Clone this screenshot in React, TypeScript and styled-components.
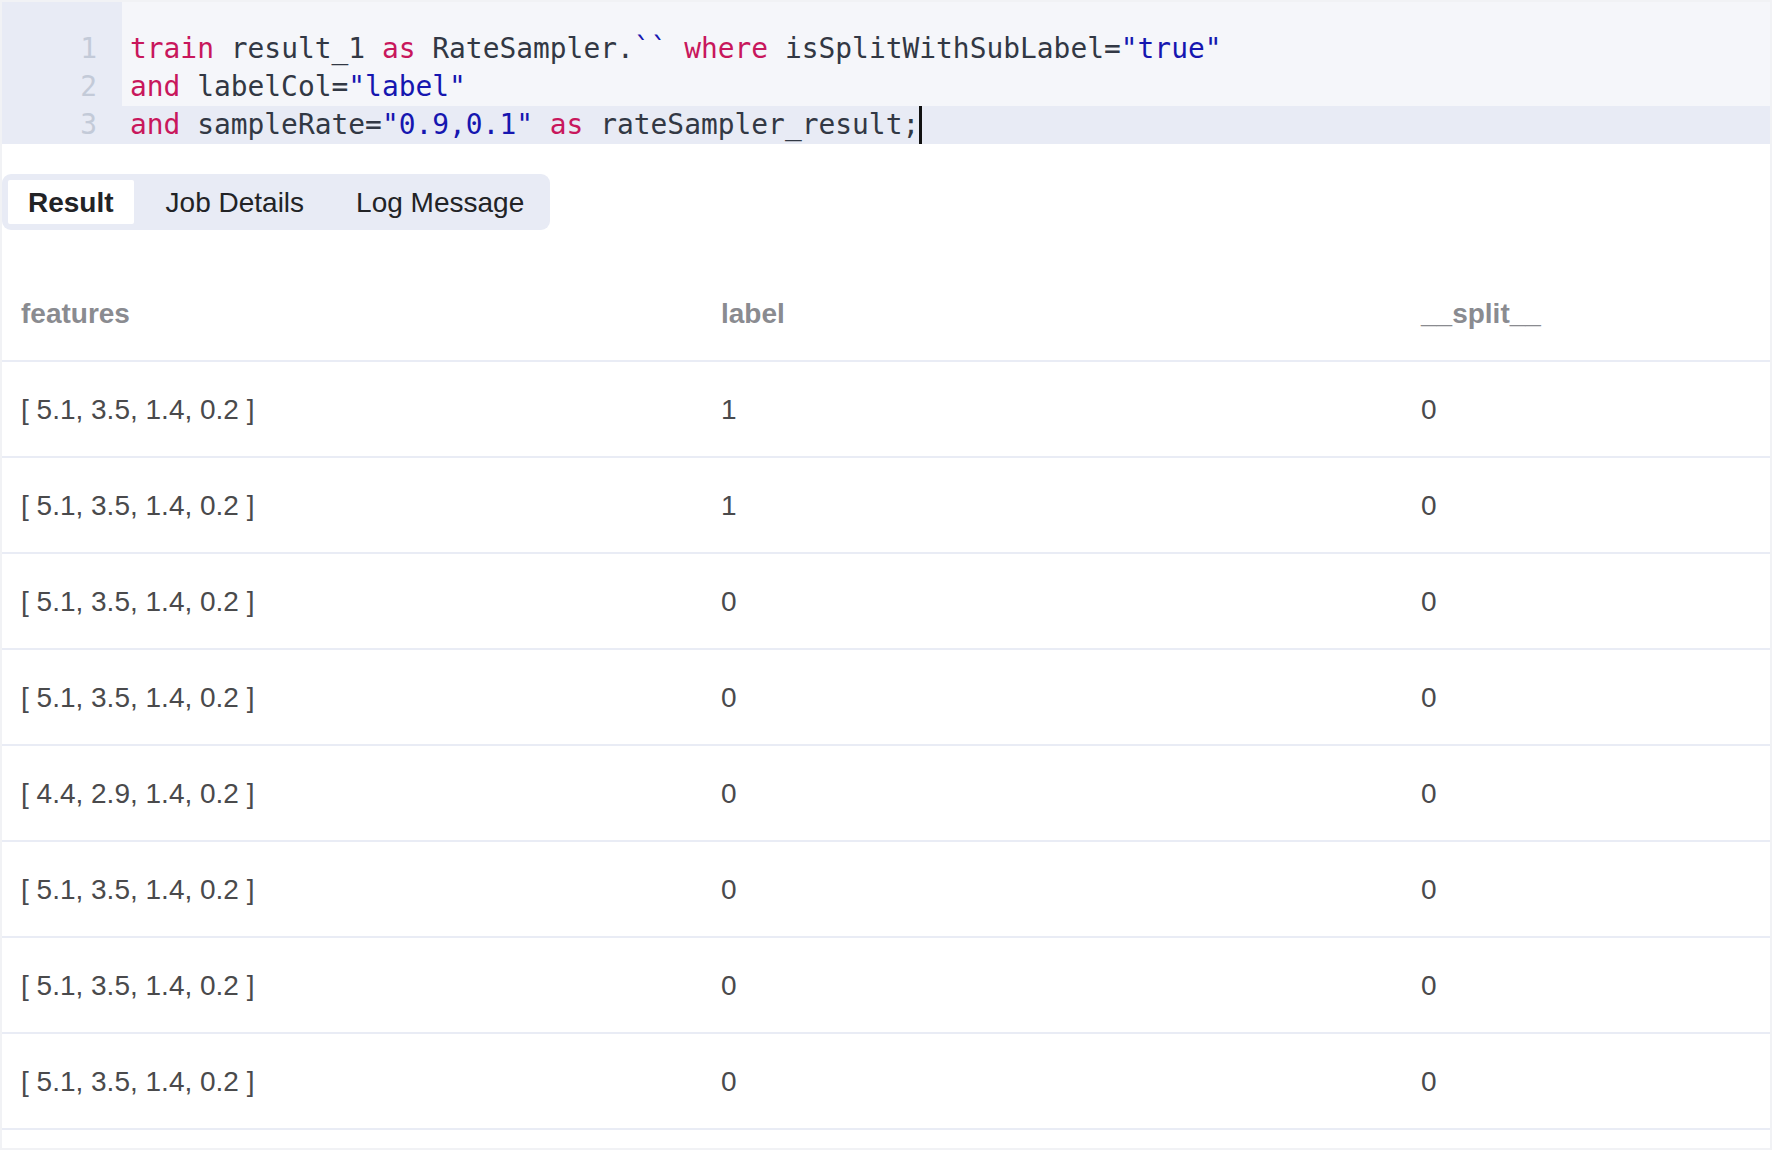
import React from "react";
import styled, { createGlobalStyle } from "styled-components";

const GlobalStyle = createGlobalStyle`
  html, body { margin: 0; padding: 0; background: #ffffff; }
  * { box-sizing: border-box; }
`;

const Page = styled.div`
  width: 1772px;
  height: 1150px;
  border: 2px solid #f1f2f5;
  background: #ffffff;
  font-family: "Liberation Sans", Arial, sans-serif;
  overflow: hidden;
`;

const Editor = styled.div`
  display: flex;
  height: 142px;
  font-family: "DejaVu Sans Mono", "Liberation Mono", monospace;
  font-size: 27.9px;
`;

const Gutter = styled.div`
  width: 120px;
  background: #e8ebf5;
  padding-top: 28px;
  display: flex;
  flex-direction: column;
`;

const LineNo = styled.div`
  height: 38px;
  line-height: 38px;
  text-align: right;
  padding-right: 25px;
  color: #c3cad8;
`;

const Code = styled.div`
  flex: 1;
  background: #f5f6fa;
  padding-top: 28px;
  display: flex;
  flex-direction: column;
`;

const CodeLine = styled.div<{ $active?: boolean }>`
  height: 38px;
  line-height: 38px;
  padding-left: 8px;
  white-space: pre;
  color: #323844;
  background: ${(p) => (p.$active ? "#e8ebf5" : "transparent")};
  display: flex;
  align-items: center;
`;

const Tok = styled.span<{ $k?: "kw" | "str" }>`
  color: ${(p) => (p.$k === "kw" ? "#c8175c" : p.$k === "str" ? "#1616b0" : "#323844")};
`;

const Caret = styled.span`
  display: inline-block;
  width: 3px;
  height: 38px;
  background: #111111;
`;

const TabBar = styled.div`
  margin-top: 30px;
  display: inline-flex;
  gap: 12px;
  padding: 6px;
  height: 56px;
  background: #e8ebf5;
  border-radius: 9px;
`;

const Tab = styled.div<{ $active?: boolean }>`
  height: 44px;
  padding: 2px 20px 0;
  display: flex;
  align-items: center;
  font-size: 28px;
  color: #222326;
  font-weight: ${(p) => (p.$active ? 700 : 400)};
  background: ${(p) => (p.$active ? "#ffffff" : "transparent")};
  border-radius: 2px;
`;

const Table = styled.div`
  margin-top: 36px;
  display: flex;
  flex-direction: column;
`;

const Row = styled.div`
  display: grid;
  grid-template-columns: 700px 700px 1fr;
  height: 96px;
  border-bottom: 2px solid #e9ecf5;
`;

const Cell = styled.div<{ $head?: boolean }>`
  display: flex;
  align-items: center;
  padding: 2px 0 0 19px;
  font-size: 28px;
  color: ${(p) => (p.$head ? "#8a8b90" : "#4a4a4c")};
  font-weight: ${(p) => (p.$head ? 700 : 400)};
  white-space: pre;
`;

const rows: [string, string, string][] = [
  ["[ 5.1, 3.5, 1.4, 0.2 ]", "1", "0"],
  ["[ 5.1, 3.5, 1.4, 0.2 ]", "1", "0"],
  ["[ 5.1, 3.5, 1.4, 0.2 ]", "0", "0"],
  ["[ 5.1, 3.5, 1.4, 0.2 ]", "0", "0"],
  ["[ 4.4, 2.9, 1.4, 0.2 ]", "0", "0"],
  ["[ 5.1, 3.5, 1.4, 0.2 ]", "0", "0"],
  ["[ 5.1, 3.5, 1.4, 0.2 ]", "0", "0"],
  ["[ 5.1, 3.5, 1.4, 0.2 ]", "0", "0"],
];

export default function App() {
  return (
    <>
      <GlobalStyle />
      <Page>
        <Editor>
          <Gutter>
            <LineNo>1</LineNo>
            <LineNo>2</LineNo>
            <LineNo>3</LineNo>
          </Gutter>
          <Code>
            <CodeLine>
              <Tok $k="kw">train</Tok>
              <Tok> result_1 </Tok>
              <Tok $k="kw">as</Tok>
              <Tok> RateSampler.</Tok>
              <Tok $k="str">``</Tok>
              <Tok> </Tok>
              <Tok $k="kw">where</Tok>
              <Tok> isSplitWithSubLabel=</Tok>
              <Tok $k="str">"true"</Tok>
            </CodeLine>
            <CodeLine>
              <Tok $k="kw">and</Tok>
              <Tok> labelCol=</Tok>
              <Tok $k="str">"label"</Tok>
            </CodeLine>
            <CodeLine $active>
              <Tok $k="kw">and</Tok>
              <Tok> sampleRate=</Tok>
              <Tok $k="str">"0.9,0.1"</Tok>
              <Tok> </Tok>
              <Tok $k="kw">as</Tok>
              <Tok> rateSampler_result;</Tok>
              <Caret />
            </CodeLine>
          </Code>
        </Editor>
        <TabBar>
          <Tab $active>Result</Tab>
          <Tab>Job Details</Tab>
          <Tab>Log Message</Tab>
        </TabBar>
        <Table>
          <Row>
            <Cell $head>features</Cell>
            <Cell $head>label</Cell>
            <Cell $head>__split__</Cell>
          </Row>
          {rows.map((r, i) => (
            <Row key={i}>
              <Cell>{r[0]}</Cell>
              <Cell>{r[1]}</Cell>
              <Cell>{r[2]}</Cell>
            </Row>
          ))}
        </Table>
      </Page>
    </>
  );
}
